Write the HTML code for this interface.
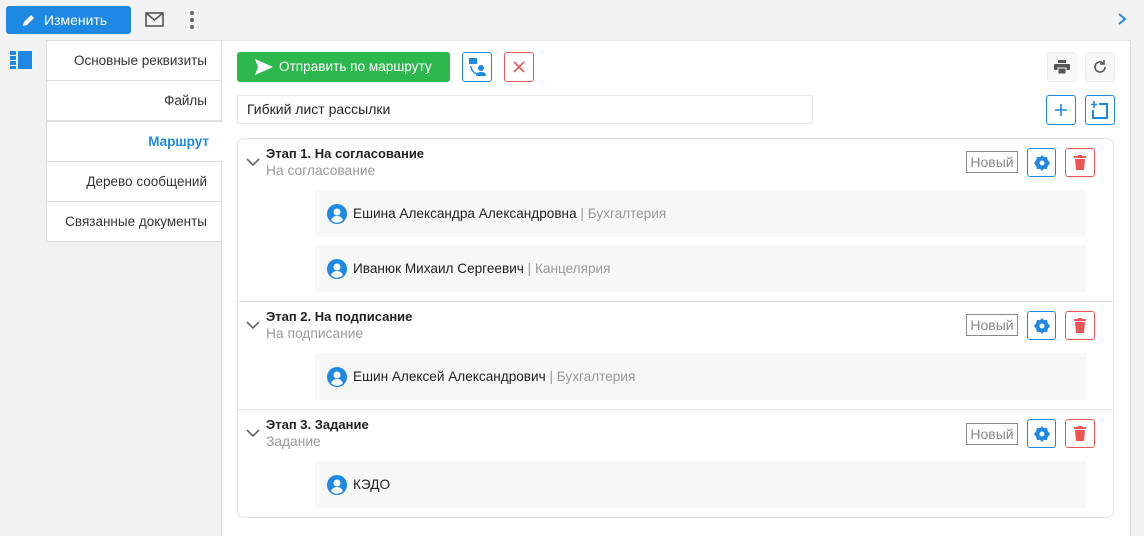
<!DOCTYPE html>
<html><head><meta charset="utf-8"><style>
*{box-sizing:border-box;margin:0;padding:0}
body{width:1144px;height:536px;background:#f2f2f2;font-family:"Liberation Sans",sans-serif;font-size:13px;color:#222;position:relative;overflow:hidden}
.abs{position:absolute}
.tab{position:absolute;left:46px;width:176px;height:41px;background:#fff;border:1px solid #ddd;text-align:right;padding-right:14px;line-height:40px;color:#333;font-size:13.5px}
.btn{position:absolute;width:30px;height:30px;border:1px solid #1e88e5;border-radius:3px;background:#fff;display:flex;align-items:center;justify-content:center}
.badge{position:absolute;left:966px;width:52px;height:22px;border:1px solid #888;color:#888;font-size:14px;line-height:20px;text-align:center}
.item{position:absolute;left:315px;width:771px;height:47px;background:#f7f7f7;display:flex;align-items:center;padding-left:12px;font-size:13.6px}
.item svg{margin-right:6px}
.dep{color:#999}
.t{position:absolute;left:266px;font-weight:bold;font-size:13px}
.s{position:absolute;left:266px;color:#999;font-size:13.8px}
.chev{position:absolute;left:246px}
</style></head><body>
<div class="abs" style="left:6px;top:6px;width:125px;height:28px;background:#1e88e5;border-radius:3px;color:#fff;font-size:14px;line-height:28px;padding-left:38px">Изменить</div>
<svg class="abs" style="left:22px;top:13px" width="14" height="14" viewBox="0 0 14 14"><path d="M1 13l1-4 7-7 3 3-7 7z" fill="#fff"/></svg>
<svg class="abs" style="left:145px;top:12px" width="19" height="15" viewBox="0 0 19 15"><rect x="1" y="1" width="17" height="13" fill="none" stroke="#555" stroke-width="1.6"/><path d="M1 1l8.5 7L18 1" fill="none" stroke="#555" stroke-width="1.6"/></svg>
<svg class="abs" style="left:189px;top:10px" width="6" height="20"><circle cx="3" cy="3" r="2" fill="#666"/><circle cx="3" cy="10" r="2" fill="#666"/><circle cx="3" cy="17" r="2" fill="#666"/></svg>
<svg class="abs" style="left:1117px;top:12px" width="10" height="14"><path d="M2 2l6 5-6 5" fill="none" stroke="#1e88e5" stroke-width="2"/></svg>
<svg class="abs" style="left:10px;top:51px" width="22" height="18"><rect x="0" y="0" width="6" height="4" fill="#1e88e5"/><rect x="0" y="5" width="6" height="4" fill="#1e88e5"/><rect x="0" y="10" width="6" height="4" fill="#1e88e5"/><rect x="0" y="15" width="6" height="3" fill="#1e88e5"/><rect x="8" y="0" width="14" height="18" fill="#1e88e5"/></svg>
<div class="abs" style="left:221px;top:40px;width:910px;height:496px;background:#fff;border-left:1px solid #ddd;border-top:1px solid #e5e5e5;border-right:1px solid #ddd"></div>
<div class="tab" style="top:40px">Основные реквизиты</div>
<div class="tab" style="top:80px">Файлы</div>
<div class="tab" style="top:121px;width:177px;border-right:none;color:#1e88e5;font-weight:bold">Маршрут</div>
<div class="tab" style="top:161px">Дерево сообщений</div>
<div class="tab" style="top:201px">Связанные документы</div>
<div class="abs" style="left:237px;top:52px;width:213px;height:30px;background:#2db84d;border-radius:3px;color:#fff;font-size:13.6px;line-height:30px;padding-left:42px">Отправить по маршруту</div>
<svg class="abs" style="left:254px;top:58px" width="20" height="18"><path d="M1 1l18 8-18 8 3-8z" fill="#fff"/></svg>
<div class="btn" style="left:462px;top:52px"><svg width="20" height="20"><rect x="2" y="1" width="8" height="6" fill="#1e88e5"/><path d="M4 9c0 5 4 8 8 8" stroke="#1e88e5" fill="none" stroke-width="1.5"/><circle cx="14" cy="11" r="3" fill="#1e88e5"/><path d="M9 19c0-3 2-4 5-4s5 1 5 4z" fill="#1e88e5"/></svg></div>
<div class="btn" style="left:504px;top:52px;border-color:#e55"><svg width="14" height="14"><path d="M2 2l10 10M12 2L2 12" stroke="#e55" stroke-width="1.6"/></svg></div>
<div class="btn" style="left:1047px;top:52px;border-color:#eee;background:#f7f7f7"><svg width="16" height="14"><rect x="4" y="0" width="8" height="3" fill="#555"/><rect x="0" y="4" width="16" height="6" rx="1" fill="#555"/><rect x="4" y="8" width="8" height="6" fill="#555" stroke="#f7f7f7"/></svg></div>
<div class="btn" style="left:1085px;top:52px;border-color:#eee;background:#f7f7f7"><svg width="14" height="14"><path d="M12 7a5 5 0 1 1-2-4" fill="none" stroke="#555" stroke-width="1.6"/><path d="M11 0v4h-4" fill="none" stroke="#555" stroke-width="1.6"/></svg></div>
<div class="abs" style="left:237px;top:95px;width:576px;height:29px;border:1px solid #e5e5e5;border-radius:2px;padding-left:9px;line-height:27px;font-size:14px">Гибкий лист рассылки</div>
<div class="btn" style="left:1046px;top:95px"><svg width="14" height="14"><path d="M7 1v12M1 7h12" stroke="#1e88e5" stroke-width="1.6"/></svg></div>
<div class="btn" style="left:1085px;top:95px"><svg width="20" height="20"><path d="M9 4h8v14H3V10" fill="none" stroke="#1e88e5" stroke-width="2"/><path d="M4 1v7M1 4.5h6" stroke="#1e88e5" stroke-width="1.6"/></svg></div>
<div class="abs" style="left:237px;top:138px;width:877px;height:380px;border:1px solid #e3e3e3;border-radius:7px"></div>
<div class="abs" style="left:238px;top:301px;width:875px;height:1px;background:#e3e3e3"></div>
<div class="abs" style="left:238px;top:409px;width:875px;height:1px;background:#e3e3e3"></div>

<svg class="chev" style="top:158px" width="14" height="9"><path d="M1 1l6 6 6-6" fill="none" stroke="#666" stroke-width="1.6"/></svg>
<div class="t" style="top:146px">Этап 1. На согласование</div><div class="s" style="top:163px">На согласование</div>
<svg class="chev" style="top:321px" width="14" height="9"><path d="M1 1l6 6 6-6" fill="none" stroke="#666" stroke-width="1.6"/></svg>
<div class="t" style="top:309px">Этап 2. На подписание</div><div class="s" style="top:326px">На подписание</div>
<svg class="chev" style="top:429px" width="14" height="9"><path d="M1 1l6 6 6-6" fill="none" stroke="#666" stroke-width="1.6"/></svg>
<div class="t" style="top:417px">Этап 3. Задание</div><div class="s" style="top:434px">Задание</div>

<div class="badge" style="top:151px">Новый</div>
<div class="badge" style="top:314px">Новый</div>
<div class="badge" style="top:423px">Новый</div>
<div class="btn" style="left:1027px;top:148px;width:29px;height:29px"><svg width="16" height="16" viewBox="0 0 16 16"><path d="M8 0l2 2.3 3-.6.6 3L16 8l-2.4 3.3-.6 3-3-.6L8 16l-2-2.3-3 .6-.6-3L0 8l2.4-3.3.6-3 3 .6z" fill="#1e88e5"/><circle cx="8" cy="8" r="2.5" fill="#fff"/></svg></div>
<div class="btn" style="left:1065px;top:148px;width:30px;height:29px;border-color:#e55"><svg width="12" height="15"><rect x="0" y="1" width="12" height="2" fill="#e55"/><rect x="4" y="0" width="4" height="2" fill="#e55"/><path d="M1 4h10l-1 11H2z" fill="#e55"/></svg></div>
<div class="btn" style="left:1027px;top:311px;width:29px;height:29px"><svg width="16" height="16" viewBox="0 0 16 16"><path d="M8 0l2 2.3 3-.6.6 3L16 8l-2.4 3.3-.6 3-3-.6L8 16l-2-2.3-3 .6-.6-3L0 8l2.4-3.3.6-3 3 .6z" fill="#1e88e5"/><circle cx="8" cy="8" r="2.5" fill="#fff"/></svg></div>
<div class="btn" style="left:1065px;top:311px;width:30px;height:29px;border-color:#e55"><svg width="12" height="15"><rect x="0" y="1" width="12" height="2" fill="#e55"/><rect x="4" y="0" width="4" height="2" fill="#e55"/><path d="M1 4h10l-1 11H2z" fill="#e55"/></svg></div>
<div class="btn" style="left:1027px;top:419px;width:29px;height:29px"><svg width="16" height="16" viewBox="0 0 16 16"><path d="M8 0l2 2.3 3-.6.6 3L16 8l-2.4 3.3-.6 3-3-.6L8 16l-2-2.3-3 .6-.6-3L0 8l2.4-3.3.6-3 3 .6z" fill="#1e88e5"/><circle cx="8" cy="8" r="2.5" fill="#fff"/></svg></div>
<div class="btn" style="left:1065px;top:419px;width:30px;height:29px;border-color:#e55"><svg width="12" height="15"><rect x="0" y="1" width="12" height="2" fill="#e55"/><rect x="4" y="0" width="4" height="2" fill="#e55"/><path d="M1 4h10l-1 11H2z" fill="#e55"/></svg></div>

<div class="item" style="top:190px"><svg width="20" height="20"><circle cx="10" cy="10" r="10" fill="#1e88e5"/><circle cx="10" cy="8" r="3.5" fill="#fff"/><path d="M4 16c1.5-3 3.5-4 6-4s4.5 1 6 4a8 8 0 0 1-12 0z" fill="#fff"/></svg>Ешина Александра Александровна<span class="dep">&nbsp;| Бухгалтерия</span></div>
<div class="item" style="top:245px"><svg width="20" height="20"><circle cx="10" cy="10" r="10" fill="#1e88e5"/><circle cx="10" cy="8" r="3.5" fill="#fff"/><path d="M4 16c1.5-3 3.5-4 6-4s4.5 1 6 4a8 8 0 0 1-12 0z" fill="#fff"/></svg>Иванюк Михаил Сергеевич<span class="dep">&nbsp;| Канцелярия</span></div>
<div class="item" style="top:353px"><svg width="20" height="20"><circle cx="10" cy="10" r="10" fill="#1e88e5"/><circle cx="10" cy="8" r="3.5" fill="#fff"/><path d="M4 16c1.5-3 3.5-4 6-4s4.5 1 6 4a8 8 0 0 1-12 0z" fill="#fff"/></svg>Ешин Алексей Александрович<span class="dep">&nbsp;| Бухгалтерия</span></div>
<div class="item" style="top:461px"><svg width="20" height="20"><circle cx="10" cy="10" r="10" fill="#1e88e5"/><circle cx="10" cy="8" r="3.5" fill="#fff"/><path d="M4 16c1.5-3 3.5-4 6-4s4.5 1 6 4a8 8 0 0 1-12 0z" fill="#fff"/></svg>КЭДО</div>
</body></html>
